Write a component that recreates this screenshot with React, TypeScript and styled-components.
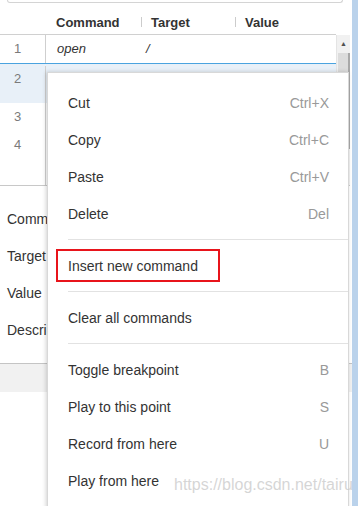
import React from 'react'
import styled, { createGlobalStyle } from 'styled-components'

const GlobalStyle = createGlobalStyle`
  html, body {
    margin: 0;
    padding: 0;
    background: #ffffff;
  }
  body {
    font-family: "Liberation Sans", Arial, sans-serif;
    color: #333333;
  }
  * {
    box-sizing: border-box;
  }
`

type Command = { id: number; command: string; target: string; value: string }

// rows 3 and 4 sit under the context menu, only their numbers show
const commands: Command[] = [
  { id: 1, command: 'open', target: '/', value: '' },
  { id: 2, command: 'setWindowSize', target: '550x694', value: '' },
  { id: 3, command: '', target: '', value: '' },
  { id: 4, command: '', target: '', value: '' }
]

type MenuEntry = { label: string; shortcut?: string; highlighted?: boolean }

const menuGroups: MenuEntry[][] = [
  [
    { label: 'Cut', shortcut: 'Ctrl+X' },
    { label: 'Copy', shortcut: 'Ctrl+C' },
    { label: 'Paste', shortcut: 'Ctrl+V' },
    { label: 'Delete', shortcut: 'Del' }
  ],
  [{ label: 'Insert new command', highlighted: true }],
  [{ label: 'Clear all commands' }],
  [
    { label: 'Toggle breakpoint', shortcut: 'B' },
    { label: 'Play to this point', shortcut: 'S' },
    { label: 'Record from here', shortcut: 'U' },
    { label: 'Play from here' }
  ]
]

const fields = ['Command', 'Target', 'Value', 'Description']

const App = () => {
  const selectedId = 2

  return (
    <>
      <GlobalStyle />
      <Page>
        <Main>
          <SearchBox />
          <TableHeader>
            <span />
            <HeaderCell>Command</HeaderCell>
            <HeaderCell>
              <HeaderDivider />
              Target
            </HeaderCell>
            <HeaderCell>
              <HeaderDivider />
              Value
            </HeaderCell>
          </TableHeader>
          <TableBody>
            <Rows>
              {commands.map(row => (
                <Row key={row.id} selected={row.id === selectedId}>
                  <IndexCell>{row.id}</IndexCell>
                  <CommandCell>{row.command}</CommandCell>
                  <TargetCell>{row.target}</TargetCell>
                  <ValueCell>{row.value}</ValueCell>
                </Row>
              ))}
              <EmptyRow>
                <IndexCell />
              </EmptyRow>
            </Rows>
            <ScrollTrack>
              <ScrollArrow>▲</ScrollArrow>
              <ScrollThumb />
            </ScrollTrack>
          </TableBody>
          <Editor>
            {fields.map(field => (
              <EditorRow key={field}>
                <EditorLabel>{field}</EditorLabel>
                <EditorInput />
              </EditorRow>
            ))}
          </Editor>
          <ToolStrip />
        </Main>
        <SideBar />

        <ContextMenu>
          {menuGroups.map((group, groupIndex) => (
            <React.Fragment key={groupIndex}>
              {groupIndex > 0 && <MenuSeparator />}
              {group.map(entry => (
                <MenuItem key={entry.label}>
                  <MenuLabel highlighted={entry.highlighted}>
                    {entry.label}
                  </MenuLabel>
                  {entry.shortcut && <Shortcut>{entry.shortcut}</Shortcut>}
                </MenuItem>
              ))}
            </React.Fragment>
          ))}
        </ContextMenu>

        <Watermark>https://blog.csdn.net/tairu</Watermark>
      </Page>
    </>
  )
}

export default App

const Page = styled.div`
  position: relative;
  display: flex;
  width: 358px;
  height: 506px;
  overflow: hidden;
  background: #ffffff;
`

const Main = styled.div`
  display: flex;
  flex-direction: column;
  width: 352px;
`

const SideBar = styled.div`
  width: 6px;
  background: #bad2eb;
`

const SearchBox = styled.div`
  height: 3px;
  margin: 0 9px 0 7px;
  border: 1px solid #d4d4d4;
  border-top: none;
  border-radius: 0 0 3px 3px;
`

const TableHeader = styled.div`
  display: grid;
  grid-template-columns: 46px 95px 94px 1fr;
  align-items: center;
  height: 32px;
  padding-top: 7px;
  margin-right: 16px;
  border-bottom: 1px solid #d0d0d0;
  font-size: 13px;
  font-weight: bold;
  color: #333333;
`

const HeaderCell = styled.div`
  display: flex;
  align-items: center;
  gap: 9px;
  padding-left: 10px;

  & + & {
    padding-left: 0;
  }
`

const HeaderDivider = styled.span`
  display: inline-block;
  width: 1px;
  height: 10px;
  background: #cccccc;
`

const TableBody = styled.div`
  display: flex;
  height: 151px;
  margin-right: 2px;
  border-bottom: 1px solid #c8c8c8;
`

const Rows = styled.div`
  flex: 1;
  display: flex;
  flex-direction: column;
`

const Row = styled.div<{ selected?: boolean }>`
  display: grid;
  grid-template-columns: 46px 95px 94px 1fr;
  align-items: start;
  height: ${({ selected }) => (selected ? '40px' : '28px')};
  padding-top: ${({ selected }) => (selected ? '3px' : '0')};
  background: ${({ selected }) => (selected ? '#e8f0f8' : '#ffffff')};
  box-shadow: ${({ selected }) => (selected ? 'inset 0 1px 0 #4aa3df' : 'none')};
  font-size: 13px;
  line-height: ${({ selected }) => (selected ? '26px' : '28px')};
`

const EmptyRow = styled.div`
  flex: 1;
  display: grid;
  grid-template-columns: 46px 1fr;
`

const IndexCell = styled.div`
  height: 100%;
  padding-left: 14px;
  border-right: 1px solid #cfcfcf;
  color: #7a7a7a;
`

const CommandCell = styled.div`
  padding-left: 11px;
  font-style: italic;
  color: #333333;
`

const TargetCell = styled.div`
  padding-left: 5px;
  font-style: italic;
  color: #333333;
`

const ValueCell = styled.div`
  padding-left: 10px;
  color: #333333;
`

const ScrollTrack = styled.div`
  display: flex;
  flex-direction: column;
  width: 14px;
  background: #f1f1f1;
  border-left: 1px solid #e4e4e4;
`

const ScrollArrow = styled.div`
  height: 17px;
  font-size: 7px;
  line-height: 17px;
  text-align: center;
  color: #505050;
`

const ScrollThumb = styled.div`
  height: 96px;
  margin: 1px 0 0 1px;
  background: #dcdcdc;
  border-right: 2px solid #a8a8a8;
`

const Editor = styled.div`
  display: flex;
  flex-direction: column;
  padding: 14px 0 15px 7px;
  border-bottom: 1px solid #c4c4c4;
`

const EditorRow = styled.div`
  display: flex;
  align-items: center;
  height: 37px;
`

const EditorLabel = styled.span`
  width: 90px;
  font-size: 14px;
  color: #333333;
`

const EditorInput = styled.div`
  flex: 1;
  height: 26px;
  margin-right: 10px;
  border: 1px solid #d4d4d4;
`

const ToolStrip = styled.div`
  height: 28px;
  background: #f1f1f1;
`

const ContextMenu = styled.div`
  position: absolute;
  left: 47px;
  top: 72px;
  width: 302px;
  height: 460px;
  padding-top: 11px;
  background: #ffffff;
  border: 1px solid #d8d8d8;
  box-shadow: -1px 0 4px rgba(0, 0, 0, 0.18);
`

const MenuItem = styled.div`
  display: flex;
  align-items: center;
  justify-content: space-between;
  height: 37px;
  padding: 0 19px 0 20px;
  font-size: 14px;
`

const MenuLabel = styled.span<{ highlighted?: boolean }>`
  color: #333333;
  ${({ highlighted }) =>
    highlighted &&
    `
    display: flex;
    align-items: center;
    height: 33px;
    margin-left: -12px;
    padding: 0 20px 0 10px;
    border: 2px solid #e8141b;
  `}
`

const Shortcut = styled.span`
  color: #999999;
`

const MenuSeparator = styled.div`
  height: 1px;
  margin: 7px 0 7px 20px;
  background: #e2e2e2;
`

const Watermark = styled.div`
  position: absolute;
  left: 174px;
  top: 476px;
  font-size: 16px;
  color: rgba(200, 200, 200, 0.75);
  white-space: nowrap;
  pointer-events: none;
`
